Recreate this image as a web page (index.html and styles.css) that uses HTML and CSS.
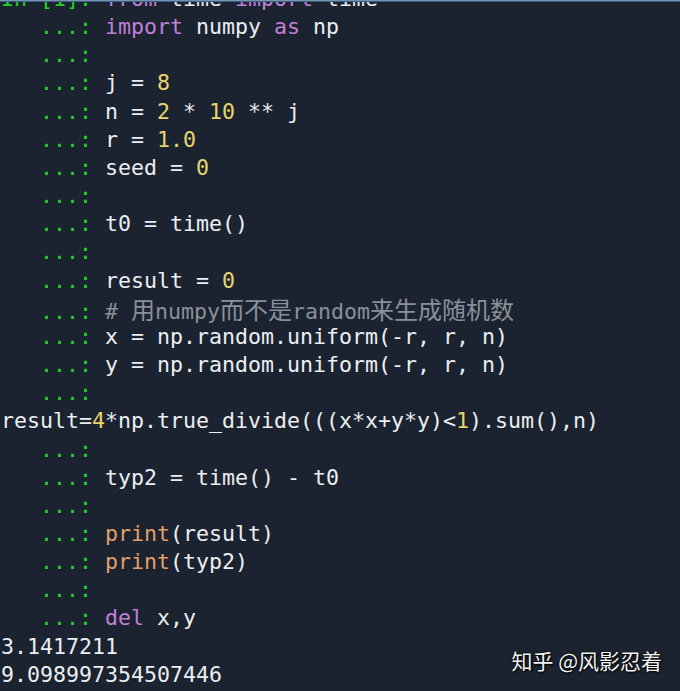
FILE: index.html
```html
<!DOCTYPE html>
<html>
<head>
<meta charset="utf-8">
<link rel="stylesheet" href="styles.css">
</head>
<body>
<div class="topbar"></div>
<div class="term">
<div class="lines">
<div class="line"><span class="g">In [1]: </span><span class="k">from</span> time <span class="k">import</span> time</div>
<div class="line"><span class="g">   ...: </span><span class="k">import</span> numpy <span class="k">as</span> np</div>
<div class="line"><span class="g">   ...:</span></div>
<div class="line"><span class="g">   ...: </span>j = <span class="n">8</span></div>
<div class="line"><span class="g">   ...: </span>n = <span class="n">2</span> * <span class="n">10</span> ** j</div>
<div class="line"><span class="g">   ...: </span>r = <span class="n">1.0</span></div>
<div class="line"><span class="g">   ...: </span>seed = <span class="n">0</span></div>
<div class="line"><span class="g">   ...:</span></div>
<div class="line"><span class="g">   ...: </span>t0 = time()</div>
<div class="line"><span class="g">   ...:</span></div>
<div class="line"><span class="g">   ...: </span>result = <span class="n">0</span></div>
<div class="line"><span class="g">   ...: </span><span class="c"># <span class="cjk">用</span>numpy<span class="cjk">而不是</span>random<span class="cjk">来生成随机数</span></span></div>
<div class="line"><span class="g">   ...: </span>x = np.random.uniform(-r, r, n)</div>
<div class="line"><span class="g">   ...: </span>y = np.random.uniform(-r, r, n)</div>
<div class="line"><span class="g">   ...:</span></div>
<div class="line">result=<span class="n">4</span>*np.true_divide(((x*x+y*y)&lt;<span class="n">1</span>).sum(),n)</div>
<div class="line"><span class="g">   ...:</span></div>
<div class="line"><span class="g">   ...: </span>typ2 = time() - t0</div>
<div class="line"><span class="g">   ...:</span></div>
<div class="line"><span class="g">   ...: </span><span class="f">print</span>(result)</div>
<div class="line"><span class="g">   ...: </span><span class="f">print</span>(typ2)</div>
<div class="line"><span class="g">   ...:</span></div>
<div class="line"><span class="g">   ...: </span><span class="k">del</span> x,y</div>
<div class="line">3.1417211</div>
<div class="line">9.098997354507446</div>
</div>
</div>
<div class="mark">知乎 @风影忍着</div>
</body>
</html>
```
FILE: styles.css
```css
html, body {
  margin: 0;
  padding: 0;
  background: #1b2330;
  width: 680px;
  height: 691px;
  overflow: hidden;
}
body {
  position: relative;
}
.topbar {
  height: 1px;
  background: #7d93a8;
  border-bottom: 1px solid #35608c;
}
.term {
  height: 689px;
  overflow: hidden;
}
.lines {
  margin-top: -17px;
  padding-left: 1px;
  font-family: "DejaVu Sans Mono", "Noto Sans CJK SC", monospace;
  font-size: 21.6px;
  color: #eceef0;
}
.line {
  height: 28.17px;
  line-height: 28.17px;
  white-space: pre;
}
.g { color: #23d12a; }
.k { color: #c27fd6; }
.n { color: #e8d56c; }
.f { color: #e0a06a; }
.c { color: #8a9099; }
.cjk {
  font-family: "Noto Sans CJK SC", sans-serif;
  font-size: 24px;
  line-height: 28.17px;
}
.mark {
  position: absolute;
  right: 18px;
  bottom: 18px;
  font-family: "Noto Sans CJK SC", sans-serif;
  font-size: 21px;
  line-height: 26px;
  color: #f2f2f2;
  text-shadow: 0 0 2px #000, 1px 1px 2px #000;
}
```
